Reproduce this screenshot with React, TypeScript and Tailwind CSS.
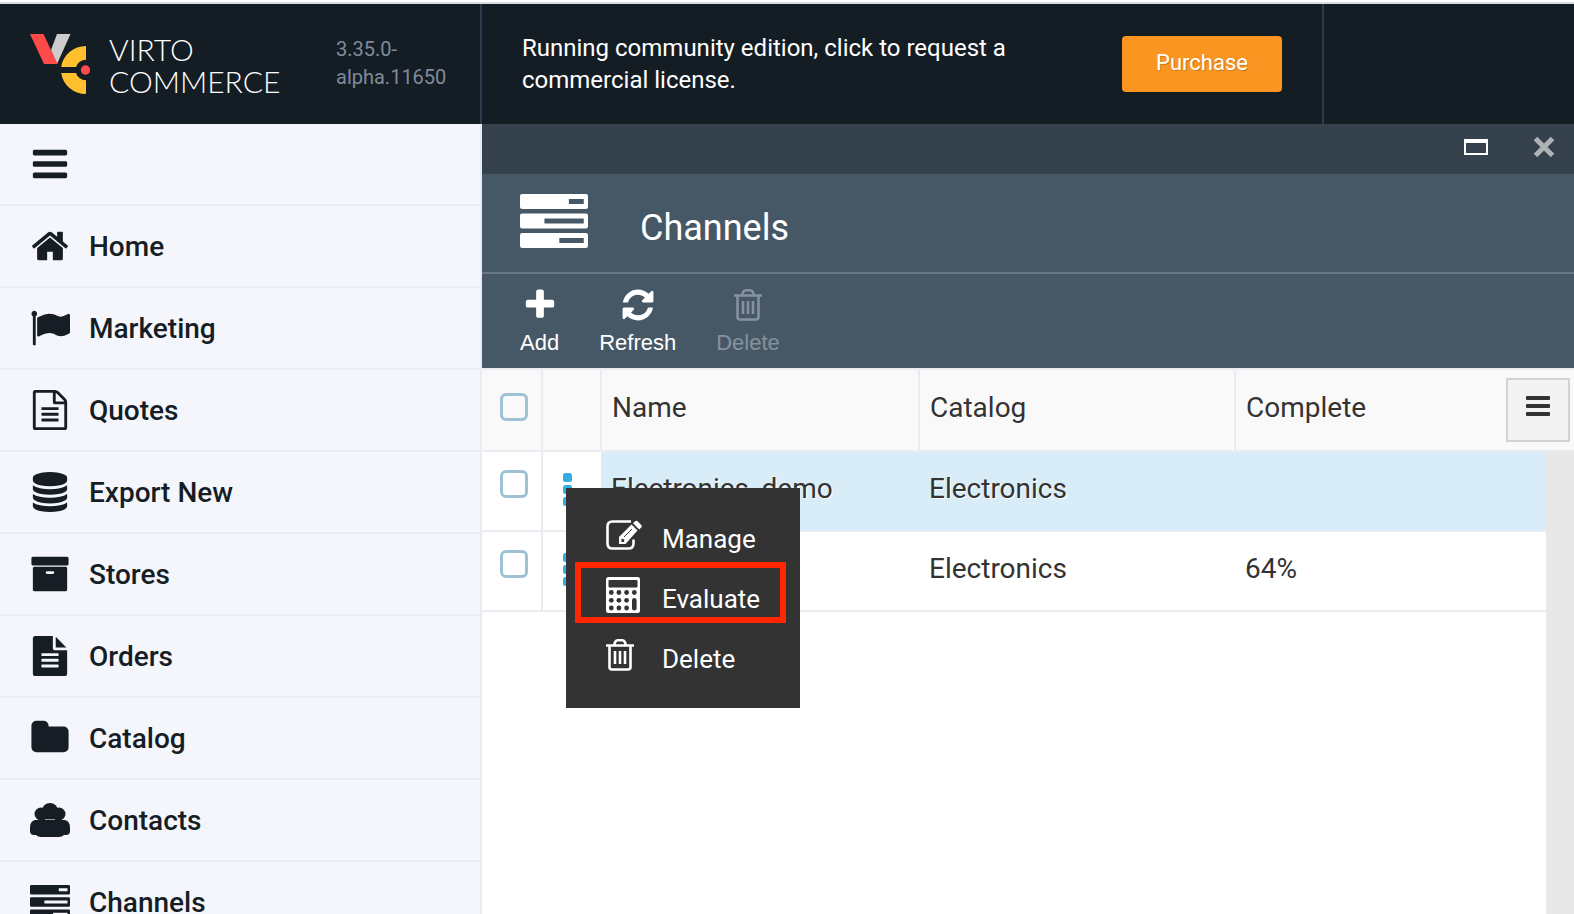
import React from "react";

const BARS = "M1664 1344v128q0 26-19 45t-45 19h-1408q-26 0-45-19t-19-45v-128q0-26 19-45t45-19h1408q26 0 45 19t19 45zm0-512v128q0 26-19 45t-45 19h-1408q-26 0-45-19t-19-45v-128q0-26 19-45t45-19h1408q26 0 45 19t19 45zm0-512v128q0 26-19 45t-45 19h-1408q-26 0-45-19t-19-45v-128q0-26 19-45t45-19h1408q26 0 45 19t19 45z";
const HOME = "M1472 992v480q0 26-19 45t-45 19h-384v-384h-256v384h-384q-26 0-45-19t-19-45v-480q0-1 .5-3t.5-3l575-474 575 474q1 2 1 6zm223-69l-62 74q-8 9-21 11h-3q-13 0-21-7l-692-577-692 577q-12 8-24 7-13-2-21-11l-62-74q-8-10-7-23.5t11-21.5l719-599q32-26 76-26t76 26l244 204v-195q0-14 9-23t23-9h192q14 0 23 9t9 23v408l219 182q10 8 11 21.5t-7 23.5z";
const FLAG = "M320 256q0 72-64 110v1266q0 13-9.5 22.5t-22.5 9.5h-64q-13 0-22.5-9.5t-9.5-22.5v-1266q-64-38-64-110 0-53 37.5-90.5t90.5-37.5 90.5 37.5 37.5 90.5zm1472 64v763q0 25-12.5 38.5t-39.5 27.5q-215 116-369 116-61 0-123.5-22t-108.5-48-115.5-48-142.5-22q-192 0-464 146-17 9-33 9-26 0-45-19t-19-45v-742q0-32 31-55 21-14 79-43 236-120 421-120 107 0 200 29t219 88q38 19 88 19 54 0 117.5-21t110-47 88-47 54.5-21q26 0 45 19t19 45z";
const FILE_O = "M1596 380q28 28 48 76t20 88v1152q0 40-28 68t-68 28h-1344q-40 0-68-28t-28-68v-1600q0-40 28-68t68-28h896q40 0 88 20t76 48zm-444-244v376h376q-10-29-22-41l-313-313q-12-12-41-22zm384 1528v-1024h-416q-40 0-68-28t-28-68v-416h-768v1536h1280zm-1024-864q0-14 9-23t23-9h704q14 0 23 9t9 23v64q0 14-9 23t-23 9h-704q-14 0-23-9t-9-23v-64zm736 224q14 0 23 9t9 23v64q0 14-9 23t-23 9h-704q-14 0-23-9t-9-23v-64q0-14 9-23t23-9h704zm0 256q14 0 23 9t9 23v64q0 14-9 23t-23 9h-704q-14 0-23-9t-9-23v-64q0-14 9-23t23-9h704z";
const DATABASE = "M896 768q237 0 443-43t325-127v170q0 69-103 128t-280 93.5-385 34.5-385-34.5-280-93.5-103-128v-170q119 84 325 127t443 43zm0 768q237 0 443-43t325-127v170q0 69-103 128t-280 93.5-385 34.5-385-34.5-280-93.5-103-128v-170q119 84 325 127t443 43zm0-384q237 0 443-43t325-127v170q0 69-103 128t-280 93.5-385 34.5-385-34.5-280-93.5-103-128v-170q119 84 325 127t443 43zm0-1152q208 0 385 34.5t280 93.5 103 128v128q0 69-103 128t-280 93.5-385 34.5-385-34.5-280-93.5-103-128v-128q0-69 103-128t280-93.5 385-34.5z";
const ARCHIVE = "M1088 832q0-26-19-45t-45-19h-256q-26 0-45 19t-19 45 19 45 45 19h256q26 0 45-19t19-45zm576-192v960q0 26-19 45t-45 19h-1408q-26 0-45-19t-19-45v-960q0-26 19-45t45-19h1408q26 0 45 19t19 45zm64-448v256q0 26-19 45t-45 19h-1536q-26 0-45-19t-19-45v-256q0-26 19-45t45-19h1536q26 0 45 19t19 45z";
const FILE = "M1596 476q14 14 28 36h-472v-472q22 14 36 28zm-476 164h544v1056q0 40-28 68t-68 28h-1344q-40 0-68-28t-28-68v-1600q0-40 28-68t68-28h800v544q0 40 28 68t68 28zm160 736v-64q0-14-9-23t-23-9h-704q-14 0-23 9t-9 23v64q0 14 9 23t23 9h704q14 0 23-9t9-23zm0-256v-64q0-14-9-23t-23-9h-704q-14 0-23 9t-9 23v64q0 14 9 23t23 9h704q14 0 23-9t9-23zm0-256v-64q0-14-9-23t-23-9h-704q-14 0-23 9t-9 23v64q0 14 9 23t23 9h704q14 0 23-9t9-23z";
const FOLDER = "M1728 608v704q0 92-66 158t-158 66h-1216q-92 0-158-66t-66-158v-960q0-92 66-158t158-66h320q92 0 158 66t66 158v32h672q92 0 158 66t66 158z";
const PLUS = "M1600 736v192q0 40-28 68t-68 28h-416v416q0 40-28 68t-68 28h-192q-40 0-68-28t-28-68v-416h-416q-40 0-68-28t-28-68v-192q0-40 28-68t68-28h416v-416q0-40 28-68t68-28h192q40 0 68 28t28 68v416h416q40 0 68 28t28 68z";
const REFRESH = "M1639 1056q0 5-1 7-64 268-268 434.5t-478 166.5q-146 0-282.5-55t-243.5-157l-129 129q-19 19-45 19t-45-19-19-45v-448q0-26 19-45t45-19h448q26 0 45 19t19 45-19 45l-137 137q71 66 161 102t187 36q134 0 250-65t186-179q11-17 53-117 8-23 30-23h192q13 0 22.5 9.5t9.5 22.5zm25-800v448q0 26-19 45t-45 19h-448q-26 0-45-19t-19-45 19-45l138-138q-148-137-349-137-134 0-250 65t-186 179q-11 17-53 117-8 23-30 23h-199q-13 0-22.5-9.5t-9.5-22.5v-7q65-268 270-434.5t480-166.5q146 0 284 55.5t245 156.5l130-129q19-19 45-19t45 19 19 45z";

function Glyph({ d, className }: { d: string; className: string }) {
  return (
    <svg aria-hidden="true" viewBox="0 0 1792 1792" fill="currentColor" className={className}>
      <path d={d} />
    </svg>
  );
}

function Contacts() {
  return (
    <svg aria-hidden="true" viewBox="0 0 40 40" fill="currentColor" className="size-10">
      <circle cx="20" cy="11" r="8" />
      <circle cx="11" cy="14" r="6.5" />
      <circle cx="29" cy="14" r="6.5" />
      <path d="M10 15h20v6H10z" />
      <path d="M5 20h30q5 1 5 8v3q0 4-4 4h-2q-2 2-5 2H11q-3 0-5-2H4q-4 0-4-4v-3q0-7 5-8z" />
      <path d="M15 19.500h10" stroke="#f4f6fb" strokeWidth="0.6" />
    </svg>
  );
}

function Channels({ className }: { className: string }) {
  return (
    <svg aria-hidden="true" viewBox="0 0 64 54" preserveAspectRatio="none" fill="currentColor" fillRule="evenodd" className={className}>
      <path d="M2 0H62a2 2 0 0 1 2 2V13a2 2 0 0 1-2 2H2a2 2 0 0 1-2-2V2a2 2 0 0 1 2-2ZM46 5v5H60V5Z" />
      <path d="M2 19.500H62a2 2 0 0 1 2 2V32.500a2 2 0 0 1-2 2H2a2 2 0 0 1-2-2V21.500a2 2 0 0 1 2-2ZM23 24.500v5H60v-5Z" />
      <path d="M2 39H62a2 2 0 0 1 2 2V52a2 2 0 0 1-2 2H2a2 2 0 0 1-2-2V41a2 2 0 0 1 2-2ZM37 44v5H60V44Z" />
    </svg>
  );
}

function Trash({ className }: { className: string }) {
  return (
    <svg aria-hidden="true" viewBox="0 0 28 32" fill="none" stroke="currentColor" strokeWidth="2.600" className={className}>
      <path d="M0 6.500h28M3.500 7v21q0 2.500 2.500 2.500h16q2.500 0 2.500-2.500V7M8 6.500l1.200-3.500q.6-1.700 2.300-1.700h5q1.700 0 2.300 1.700L20 6.500" />
      <path d="M9 12v13M14 12v13M19 12v13" />
    </svg>
  );
}

function Edit() {
  return (
    <svg aria-hidden="true" viewBox="0 0 36 30" fill="none" stroke="currentColor" className="h-[30px] w-9">
      <path d="M25 1.500H6.500Q1.500 1.500 1.500 6.500v17q0 5 5 5h16q5 0 5-5v-4" strokeWidth="2.600" />
      <path d="M13 24v-7L25.500 4.500l6 6L19.500 24z" fill="currentColor" stroke="none" />
      <path d="M27 3.300l2-2q1.300-1.300 2.600 0l3.600 3.600q1.300 1.300 0 2.600l-2 2z" fill="currentColor" stroke="none" />
      <path d="M18 17l8-8" stroke="#333" strokeWidth="1" />
      <path d="M15.500 18.500l2.800 1-.3 2.500h-2.500z" fill="#333" stroke="none" />
    </svg>
  );
}

function Calculator() {
  return (
    <svg aria-hidden="true" viewBox="0 0 34 36" className="h-9 w-[34px]">
      <rect width="34" height="36" rx="2.500" fill="currentColor" />
      <rect x="2.500" y="3" width="29" height="7.500" rx="1" fill="#333" />
      {[15.5, 23.3, 31].map((y) =>
        [5.3, 12.9, 20.6].map((x) => <circle key={x + "-" + y} cx={x} cy={y} r="2.400" fill="#333" />),
      )}
      <circle cx="28.300" cy="15.500" r="2.400" fill="#333" />
      <rect x="26" y="21" width="4.600" height="12.500" rx="2.300" fill="#333" />
    </svg>
  );
}

function Logo() {
  return (
    <svg aria-hidden="true" viewBox="0 0 60 60" className="size-[60px]">
      <path d="M27 0h13.500L27 30l-6-14z" fill="#ccc" />
      <path d="M0 0h13.500L27.500 30H14z" fill="#ff4a4a" />
      <path d="M56 12V25.700A10.300 10.300 0 0 0 46 33H31.200A25 24 0 0 1 56 12z" fill="#ffbf2e" />
      <path d="M56 60V46.300A10.300 10.300 0 0 1 46 39H31.200A25 24 0 0 0 56 60z" fill="#ffbf2e" />
      <circle cx="55.500" cy="36" r="4.700" fill="#ff4a4a" />
    </svg>
  );
}

const menu = [
  { label: "Home", icon: <Glyph d={HOME} className="size-10" /> },
  { label: "Marketing", icon: <Glyph d={FLAG} className="size-10" /> },
  { label: "Quotes", icon: <Glyph d={FILE_O} className="size-10" /> },
  { label: "Export New", icon: <Glyph d={DATABASE} className="size-10" /> },
  { label: "Stores", icon: <Glyph d={ARCHIVE} className="size-10" /> },
  { label: "Orders", icon: <Glyph d={FILE} className="size-10" /> },
  { label: "Catalog", icon: <Glyph d={FOLDER} className="size-10" /> },
  { label: "Contacts", icon: <Contacts /> },
  { label: "Channels", icon: <Channels className="h-[34px] w-10" /> },
];

const rows = [
  { name: "Electronics_demo", catalog: "Electronics", complete: "" },
  { name: "", catalog: "Electronics", complete: "64%" },
];

function Tick({ label }: { label: string }) {
  return (
    <input
      type="checkbox"
      aria-label={label}
      className="block size-7 appearance-none rounded-md border-3 border-[#9fc1d6]"
    />
  );
}

function Dots() {
  return (
    <svg aria-hidden="true" viewBox="0 0 9 33" fill="#34ace4" className="h-[33px] w-[9px]">
      <rect width="9" height="9" rx="2.500" />
      <rect y="12" width="9" height="9" rx="2.500" />
      <rect y="24" width="9" height="9" rx="2.500" />
    </svg>
  );
}

export default function App() {
  return (
    <div className="flex h-screen flex-col overflow-hidden bg-white font-['Roboto',sans-serif] text-[#333]">
      <header className="mt-0.5 flex h-[122px] shrink-0 border-t-2 border-[#d9dde1] bg-[#151d24] text-white">
        <div className="flex w-[482px] shrink-0 border-r-2 border-[#2e3b4e] pt-[30px] pl-[30px]">
          <Logo />
          <div className="-mt-px ml-[19px] w-[227px] font-['Lato',sans-serif] text-[30px] leading-8 font-light">
            VIRTO<br />COMMERCE
          </div>
          <div className="pt-px text-xl leading-7 text-[#7f8b9b]">3.35.0-<br />alpha.11650</div>
        </div>
        <div className="flex min-w-0 flex-1 items-start justify-between border-r-2 border-[#2e3b4e] pt-8 pr-10 pl-10">
          <p className="-mt-1 w-[520px] text-2xl">Running community edition, click to request a commercial license.</p>
          <button className="h-14 w-40 shrink-0 rounded bg-[#fa9521] pb-1 text-[22px] text-shadow-[1px_1px_0_#cf7b1b]">Purchase</button>
        </div>
        <div className="w-[250px] shrink-0" />
      </header>

      <div className="flex min-h-0 flex-1">
        <nav className="w-[482px] shrink-0 overflow-hidden border-r-2 border-[#e9ecf2] bg-[#f4f6fb] text-[#161d25]">
          <button aria-label="Toggle menu" className="flex h-[82px] w-full items-center border-b-2 border-[#e9ecf1] pl-[30px]">
            <Glyph d={BARS} className="size-10" />
          </button>
          {menu.map((m) => (
            <a key={m.label} href="#" className="flex h-[82px] items-center gap-[19px] border-b-2 border-[#e9ecf1] pl-[30px]">
              {m.icon}
              <span className="pt-0.5 text-[28px] leading-9 font-medium">{m.label}</span>
            </a>
          ))}
        </nav>

        <main className="flex min-w-0 flex-1 flex-col">
          <div className="flex h-[50px] shrink-0 items-center justify-end gap-[45px] bg-[#35414d] pr-[19px] pb-1">
            <button aria-label="Maximize">
              <svg aria-hidden="true" viewBox="0 0 24 16" className="h-4 w-6">
                <path d="M0 0h24v16H0zM2 4v10h20V4z" fill="#fff" fillRule="evenodd" />
              </svg>
            </button>
            <button aria-label="Close">
              <svg aria-hidden="true" viewBox="0 0 22 22" className="size-[22px]">
                <path d="M2.500 2.500l17 17M19.500 2.500l-17 17" stroke="#aeb3b8" strokeWidth="5" />
              </svg>
            </button>
          </div>
          <div className="flex h-[100px] shrink-0 items-center gap-[52px] border-b-2 border-[#677785] bg-[#465866] pl-[38px] text-white">
            <Channels className="mb-1 h-[54px] w-[68px]" />
            <h1 className="pt-2.5 text-4xl">Channels</h1>
          </div>
          <div className="flex h-[94px] shrink-0 gap-10 bg-[#465866] pt-[13px] pl-[38px] font-['Liberation_Sans',sans-serif] text-[22px] leading-7 text-white">
            <button className="flex flex-col items-center gap-1.5"><Glyph d={PLUS} className="size-9" />Add</button>
            <button className="flex flex-col items-center gap-1.5"><Glyph d={REFRESH} className="size-9" />Refresh</button>
            <button className="flex flex-col items-center gap-1.5 text-[#87919e]"><span className="flex h-9 items-center"><Trash className="h-8 w-7" /></span>Delete</button>
          </div>

          <div className="relative flex min-h-0 flex-1 items-start bg-white text-[28px] text-shadow-[1px_1px_0_#fff]">
            <table className="w-full table-fixed border-collapse text-left">
              <colgroup>
                <col className="w-[60px]" />
                <col className="w-[59px]" />
                <col className="w-[318px]" />
                <col className="w-[316px]" />
                <col />
                <col className="w-7" />
              </colgroup>
              <thead>
                <tr className="h-[82px] border-y-2 border-[#e9edf2] bg-[#f9f9f9]">
                  <th className="border-r-2 border-[#e9edf2] pb-1.5 pl-[18px]"><Tick label="Select all" /></th>
                  <th className="border-r-2 border-[#e9edf2]" aria-label="Actions" />
                  <th className="border-r-2 border-[#e9edf2] pb-1 pl-2.5 font-normal">Name</th>
                  <th className="border-r-2 border-[#e9edf2] pb-1 pl-2.5 font-normal">Catalog</th>
                  <th className="pb-1 pl-2.5 font-normal">Complete</th>
                  <td />
                </tr>
              </thead>
              <tbody>
                {rows.map((r, i) => (
                  <tr key={i} className="h-20 border-b-2 border-[#e9edf2]">
                    <td className="border-r-2 border-[#e9edf2] pb-3.5 pl-[18px]"><Tick label={"Select row " + (i + 1)} /></td>
                    <td className="pb-1 pl-5"><button aria-label="Row actions" className="block"><Dots /></button></td>
                    <td className={i === 0 ? "bg-[#d8edf8] pb-1 pl-2.5" : "pb-1 pl-2.5"}>{r.name}</td>
                    <td className={i === 0 ? "bg-[#d8edf8] pb-1 pl-2.5" : "pb-1 pl-2.5"}>{r.catalog}</td>
                    <td className={i === 0 ? "bg-[#d8edf8] pb-1 pl-2.5" : "pb-1 pl-2.5"}>{r.complete}</td>
                    <td className="bg-[#e8e8e8]" />
                  </tr>
                ))}
              </tbody>
            </table>
            <div className="absolute top-[82px] right-0 bottom-0 w-7 bg-[#e8e8e8]" />
            <button aria-label="Grid menu" className="absolute top-2.5 right-1 flex size-16 items-start justify-center border-2 border-[#d3d3d3] bg-[#f3f3f3] pt-3">
              <Glyph d={BARS} className="size-7" />
            </button>

            <div role="menu" className="absolute top-[120px] left-[84px] h-[220px] w-[234px] bg-[#333] pt-[21px] text-[26px] text-white text-shadow-none">
              {[
                { label: "Manage", icon: <Edit /> },
                { label: "Evaluate", icon: <Calculator /> },
                { label: "Delete", icon: <Trash className="h-8 w-7" /> },
              ].map((m) => (
                <button key={m.label} role="menuitem" className="flex h-[60px] w-full items-start pl-10">
                  <span className="flex h-[52px] w-14 items-center">{m.icon}</span>
                  <span className="pt-3 leading-9">{m.label}</span>
                </button>
              ))}
              <div className="pointer-events-none absolute top-[74px] left-[9px] h-[61px] w-[211px] border-6 border-[#ff2600]" />
            </div>
          </div>
        </main>
      </div>
    </div>
  );
}
